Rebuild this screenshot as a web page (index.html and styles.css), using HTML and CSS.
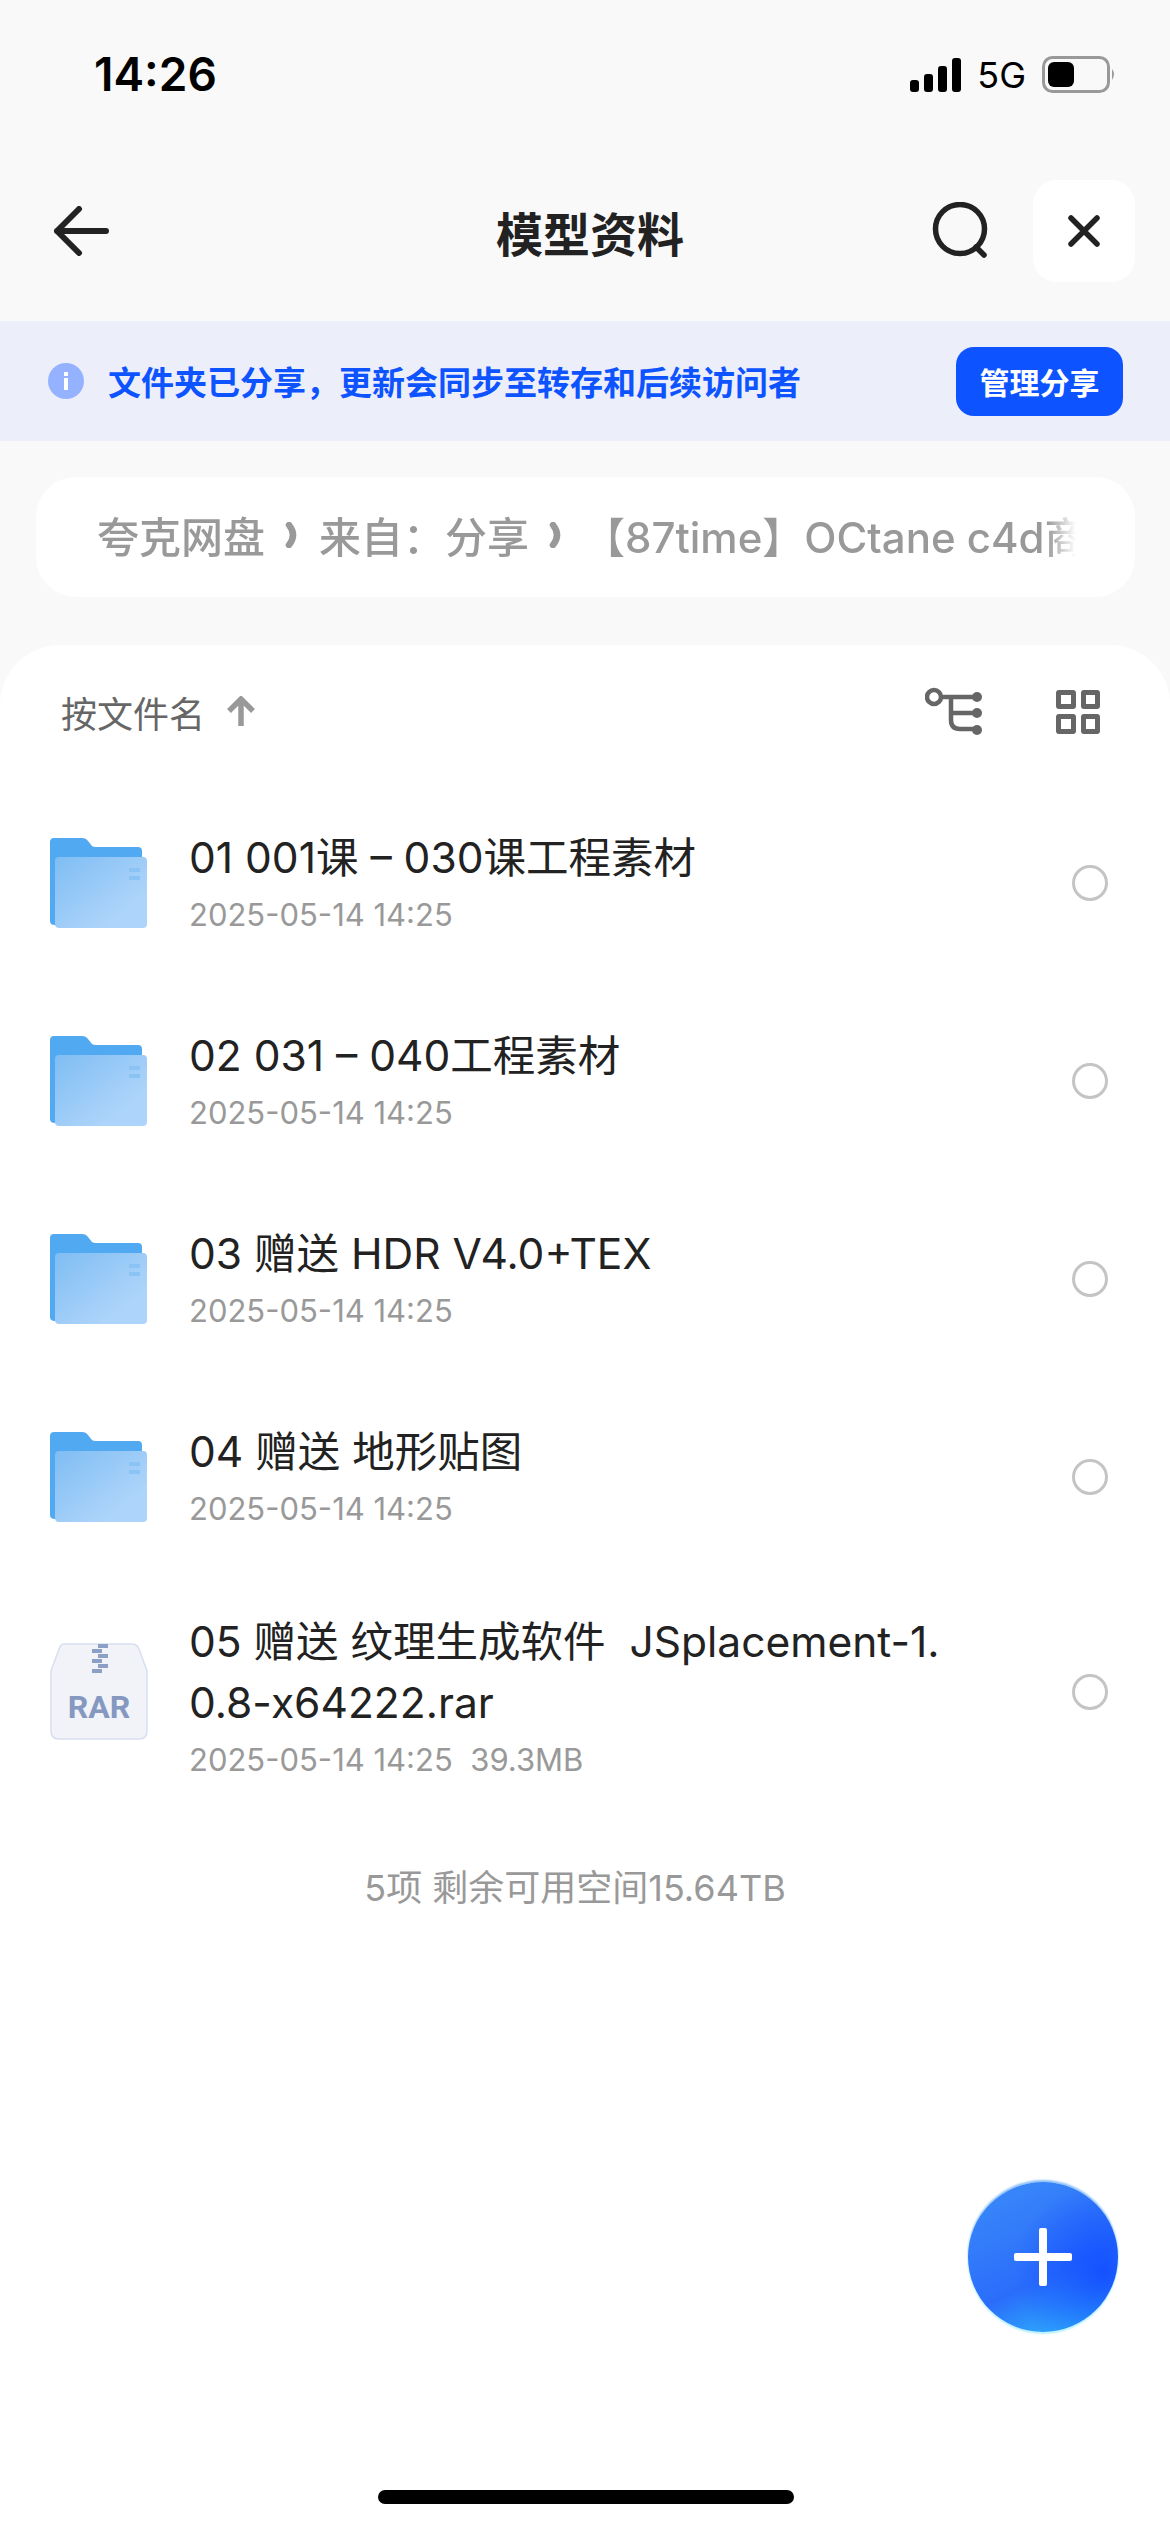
FILE: index.html
```html
<!DOCTYPE html>
<html lang="zh-CN">
<head>
    <meta charset="UTF-8">
    <meta name="viewport" content="width=device-width, initial-scale=1.0">
    <title>模型资料</title>
    <link rel="stylesheet" href="styles.css">
</head>
<body>
    <div class="page">
        <!-- status bar -->
        <div class="status-bar">
            <span class="time">14:26</span>
            <div class="status-right">
                <svg class="signal" width="52" height="36" viewBox="0 0 52 36">
                    <rect x="0" y="23" width="9" height="12" rx="3"/>
                    <rect x="14" y="17" width="9" height="18" rx="3"/>
                    <rect x="28" y="9" width="9" height="26" rx="3"/>
                    <rect x="42" y="1" width="9" height="34" rx="3"/>
                </svg>
                <span class="net">5G</span>
                <svg class="battery" width="74" height="38" viewBox="0 0 74 38">
                    <rect x="1.5" y="1.5" width="65" height="34" rx="9" fill="none" stroke="#999" stroke-width="3"/>
                    <rect x="6" y="6" width="26" height="25" rx="6" fill="#000"/>
                    <path d="M70 13 q4 5 0 11z" fill="#999"/>
                </svg>
            </div>
        </div>

        <!-- nav bar -->
        <div class="nav">
            <svg class="back" width="56" height="50" viewBox="0 0 56 50">
                <path d="M25 3 L3 25 L25 47 M3 25 H52" fill="none" stroke="#222" stroke-width="6" stroke-linecap="round" stroke-linejoin="round"/>
            </svg>
            <h1 class="nav-title">模型资料</h1>
            <svg class="search" width="58" height="58" viewBox="0 0 58 58">
                <circle cx="28" cy="27" r="24.5" fill="none" stroke="#222" stroke-width="5.5"/>
                <path d="M44 45 L52 53" stroke="#222" stroke-width="5.5" stroke-linecap="round"/>
            </svg>
            <div class="close-btn">
                <svg width="32" height="32" viewBox="0 0 32 32">
                    <path d="M3 3 L29 29 M29 3 L3 29" stroke="#222" stroke-width="5.5" stroke-linecap="round"/>
                </svg>
            </div>
        </div>

        <!-- share banner -->
        <div class="banner">
            <svg class="info" width="36" height="36" viewBox="0 0 36 36">
                <circle cx="18" cy="18" r="18" fill="#94b2ff"/>
                <rect x="16" y="15" width="4" height="12" fill="#fff"/>
                <rect x="16" y="9" width="4" height="4" fill="#fff"/>
            </svg>
            <span class="banner-text">文件夹已分享，更新会同步至转存和后续访问者</span>
            <div class="banner-btn">管理分享</div>
        </div>

        <!-- breadcrumb -->
        <div class="crumbs">
            <div class="crumbs-inner">
                <span>夸克网盘</span>
                <svg class="chev" width="14" height="26" viewBox="0 0 14 26"><path d="M4 3 Q12 13 4 23" fill="none" stroke="#999" stroke-width="6.5" stroke-linecap="round"/></svg>
                <span>来自：分享</span>
                <svg class="chev" width="14" height="26" viewBox="0 0 14 26"><path d="M4 3 Q12 13 4 23" fill="none" stroke="#999" stroke-width="6.5" stroke-linecap="round"/></svg>
                <span>【87time】OCtane c4d商业实战课程</span>
            </div>
        </div>

        <!-- file list -->
        <div class="sheet">
            <div class="toolbar">
                <span class="sort">按文件名</span>
                <svg class="sort-arrow" width="32" height="32" viewBox="0 0 32 32">
                    <path d="M16 30 V4 M4 15 L16 3 L28 15" fill="none" stroke="#999" stroke-width="5.5"/>
                </svg>
                <svg class="tree" width="60" height="50" viewBox="0 0 60 50">
                    <circle cx="9" cy="10" r="7" fill="none" stroke="#666" stroke-width="4.5"/>
                    <path d="M16 10 H54 M26 10 V33 Q26 42 35 42 H54 M26 26 H54" fill="none" stroke="#666" stroke-width="4.5"/>
                    <circle cx="52" cy="10" r="5" fill="#666"/>
                    <circle cx="52" cy="26" r="5" fill="#666"/>
                    <circle cx="52" cy="43" r="5" fill="#666"/>
                </svg>
                <div class="grid-icon"><i></i><i></i><i></i><i></i></div>
            </div>

            <div class="row">
                <svg class="folder" width="98" height="92" viewBox="0 0 98 92"><use href="#folder-art"/></svg>
                <div class="row-body">
                    <div class="name">01 001课 – 030课工程素材</div>
                    <div class="meta">2025-05-14 14:25</div>
                </div>
                <div class="radio"></div>
            </div>
            <div class="row">
                <svg class="folder" width="98" height="92" viewBox="0 0 98 92"><use href="#folder-art"/></svg>
                <div class="row-body">
                    <div class="name">02 031 – 040工程素材</div>
                    <div class="meta">2025-05-14 14:25</div>
                </div>
                <div class="radio"></div>
            </div>
            <div class="row">
                <svg class="folder" width="98" height="92" viewBox="0 0 98 92"><use href="#folder-art"/></svg>
                <div class="row-body">
                    <div class="name">03 赠送 HDR V4.0+TEX</div>
                    <div class="meta">2025-05-14 14:25</div>
                </div>
                <div class="radio"></div>
            </div>
            <div class="row">
                <svg class="folder" width="98" height="92" viewBox="0 0 98 92"><use href="#folder-art"/></svg>
                <div class="row-body">
                    <div class="name">04 赠送 地形贴图</div>
                    <div class="meta">2025-05-14 14:25</div>
                </div>
                <div class="radio"></div>
            </div>
            <div class="row row-tall">
                <div class="rar">
                    <svg class="rar-shape" width="98" height="98" viewBox="0 0 98 98">
                        <path d="M14 1 H82 Q87 1 89 6 L97 28 V88 Q97 96 89 96 H9 Q1 96 1 88 V28 L9 6 Q11 1 14 1z" fill="#f1f3f9" stroke="#d8dff0" stroke-width="1.5"/>
                        <path d="M48 1 h10 v4 h-10z M42 6 h10 v4 h-10z M48 11 h10 v4 h-10z M42 16 h10 v4 h-10z M48 21 h10 v4 h-10z M42 26 h10 v4 h-10z" fill="#8c9fc4"/>
                    </svg>
                    <span class="rar-label">RAR</span>
                </div>
                <div class="row-body">
                    <div class="name">05 赠送 纹理生成软件&nbsp; JSplacement-1.<br>0.8-x64222.rar</div>
                    <div class="meta">2025-05-14 14:25&nbsp; 39.3MB</div>
                </div>
                <div class="radio"></div>
            </div>

            <div class="list-foot">5项 剩余可用空间15.64TB</div>

            <div class="fab">
                <svg width="58" height="58" viewBox="0 0 58 58">
                    <rect x="25" y="0" width="8" height="58" rx="2" fill="#fff"/>
                    <rect x="0" y="25" width="58" height="8" rx="2" fill="#fff"/>
                </svg>
            </div>
            <div class="home-bar"></div>
        </div>
    </div>

    <!-- shared folder artwork -->
    <svg width="0" height="0" class="defs">
        <defs>
            <linearGradient id="folderFront" x1="0" y1="0" x2="1" y2="1">
                <stop offset="0" stop-color="#7fbdf3"/>
                <stop offset="0.75" stop-color="#add4fa"/>
            </linearGradient>
            <g id="folder-art">
                <path d="M4 1 H32 Q36 1 38 4 L42 9 Q43 10 46 10 H88 Q92 10 92 14 V88 H5 Q0 88 0 84 V5 Q0 1 4 1z" fill="#51a9f2"/>
                <rect x="5" y="20" width="92" height="71" rx="4" fill="url(#folderFront)"/>
                <rect x="79" y="31" width="11" height="4" fill="#8cc3f5"/>
                <rect x="79" y="39" width="11" height="4" fill="#8cc3f5"/>
            </g>
        </defs>
    </svg>
</body>
</html>
```

FILE: styles.css
```css
* {
    box-sizing: border-box;
}

body {
    margin: 0;
    font-family: 'Inter', 'Noto Sans CJK SC', sans-serif;
    background: #f9f9f9;
    color: #222;
}

svg {
    display: block;
    flex-shrink: 0;
}

.defs {
    position: absolute;
}

.page {
    width: 1170px;
    height: 2532px;
    display: flex;
    flex-direction: column;
    overflow: hidden;
}

/* status bar */
.status-bar {
    height: 180px;
    padding: 48px 54px 0 94px;
    display: flex;
    justify-content: space-between;
    align-items: flex-start;
}

.time {
    font-size: 46px;
    line-height: 52px;
    font-weight: 600;
    color: #000;
}

.status-right {
    display: flex;
    align-items: center;
    margin-top: 8px;
}

.signal {
    fill: #000;
}

.net {
    font-size: 36px;
    line-height: 36px;
    color: #000;
    margin: 0 16px 0 15px;
}

/* nav */
.nav {
    height: 102px;
    padding: 0 35px 0 54px;
    display: flex;
    align-items: center;
    position: relative;
}

.nav-title {
    margin: 0;
    flex: 1;
    text-align: center;
    font-size: 47px;
    font-weight: 700;
    color: #222;
    padding-left: 140px;
}

.search {
    margin-right: 43px;
    margin-left: 2px;
}

.close-btn {
    width: 102px;
    height: 102px;
    background: #fff;
    border-radius: 24px;
    display: flex;
    align-items: center;
    justify-content: center;
}

/* banner */
.banner {
    margin-top: 39px;
    height: 120px;
    background: #eceef9;
    padding: 0 47px 0 48px;
    display: flex;
    align-items: center;
}

.banner-text {
    margin-left: 24px;
    flex: 1;
    font-size: 33px;
    font-weight: 600;
    color: #0d53ff;
    white-space: nowrap;
}

.banner-btn {
    width: 167px;
    height: 69px;
    background: #0d53ff;
    color: #fff;
    border-radius: 18px;
    font-size: 30px;
    font-weight: 600;
    display: flex;
    align-items: center;
    justify-content: center;
}

/* breadcrumb */
.crumbs {
    margin: 36px 35px 0 36px;
    height: 120px;
    background: #fff;
    border-radius: 40px;
    padding: 0 59px 5px 61px;
    display: flex;
    align-items: center;
}

.crumbs-inner {
    width: 100%;
    overflow: hidden;
    white-space: nowrap;
    display: flex;
    align-items: center;
    gap: 20px;
    font-size: 42px;
    font-weight: 500;
    color: #999;
    -webkit-mask-image: linear-gradient(to right, #000 97%, transparent 100%);
    mask-image: linear-gradient(to right, #000 97%, transparent 100%);
}

.crumbs-inner span {
    flex-shrink: 0;
}

/* list */
.sheet {
    margin-top: 48px;
    flex: 1;
    background: #fff;
    border-radius: 60px 60px 0 0;
    position: relative;
}

.toolbar {
    height: 139px;
    padding: 0 70px 6px 61px;
    display: flex;
    align-items: center;
}

.sort {
    font-size: 36px;
    color: #666;
}

.sort-arrow {
    margin-left: 20px;
    margin-right: auto;
}

.grid-icon {
    margin-left: 71px;
    width: 44px;
    height: 44px;
    display: grid;
    grid-template-columns: 1fr 1fr;
    gap: 5px;
}

.grid-icon i {
    border: 5px solid #666;
    border-radius: 3px;
}

.row {
    height: 198px;
    padding: 0 62px 0 50px;
    display: flex;
    align-items: center;
}

.row-tall {
    height: 232px;
}

.row-tall .row-body {
    margin-top: 12px;
}

.row-body {
    margin-left: 41px;
    flex: 1;
}

.name {
    font-size: 42.5px;
    line-height: 61px;
    color: #222;
}

.meta {
    margin-top: 2px;
    font-size: 31px;
    line-height: 50px;
    color: #999;
}

.radio {
    width: 36px;
    height: 36px;
    border: 3px solid #c4c4c4;
    border-radius: 50%;
}

.rar {
    width: 98px;
    height: 98px;
    position: relative;
}

.rar-label {
    position: absolute;
    left: 0;
    right: 0;
    top: 46px;
    text-align: center;
    font-family: 'Roboto', sans-serif;
    font-size: 32px;
    line-height: 36px;
    font-weight: 700;
    color: #8598bf;
}

.list-foot {
    margin-top: 57px;
    padding-right: 20px;
    text-align: center;
    font-size: 36px;
    line-height: 46px;
    color: #999;
}

.fab {
    position: absolute;
    left: 968px;
    top: 1537px;
    width: 150px;
    height: 150px;
    border-radius: 50%;
    background:
        radial-gradient(circle at 90% 60%, #1551ff 0%, rgba(21, 81, 255, 0) 55%),
        linear-gradient(155deg, #3c8cf8 0%, #2a6dfb 60%, #2fb5fb 92%);
    box-shadow: 0 2px 2px #b6f1ff, 0 -2px 2px #8cc1fa;
    display: flex;
    align-items: center;
    justify-content: center;
}

.home-bar {
    position: absolute;
    left: 378px;
    top: 1845px;
    width: 416px;
    height: 14px;
    border-radius: 7px;
    background: #000;
}
```
